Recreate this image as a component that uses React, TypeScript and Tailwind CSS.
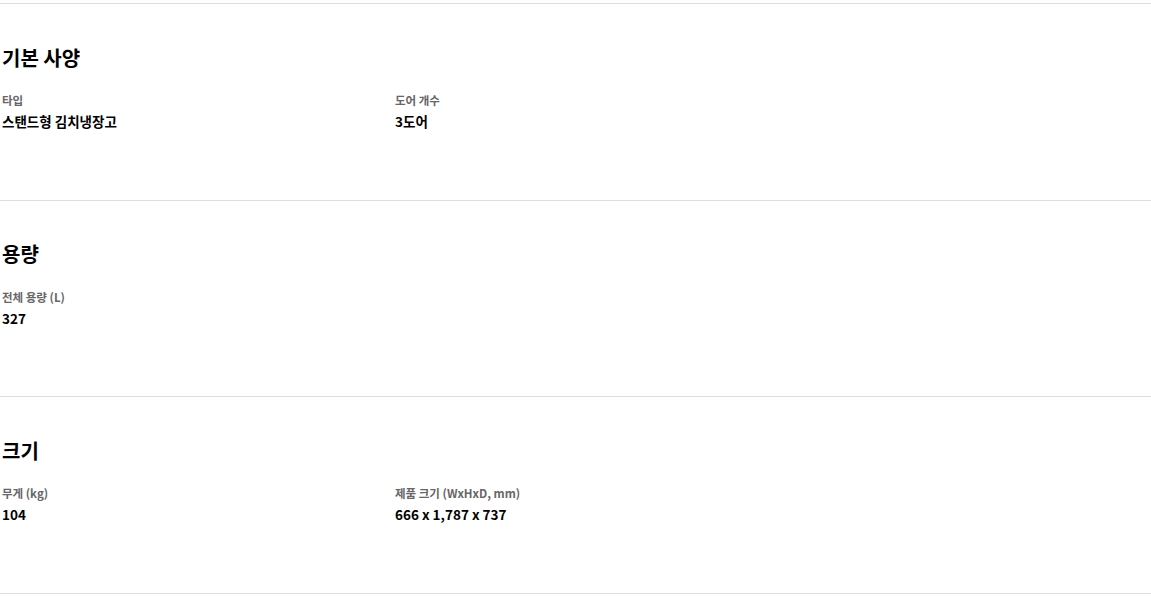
import React from "react";

interface SpecItem {
  label: string;
  value: string;
}

interface SpecSection {
  title: string;
  items: SpecItem[];
}

const sections: SpecSection[] = [
  {
    title: "기본 사양",
    items: [
      { label: "타입", value: "스탠드형 김치냉장고" },
      { label: "도어 개수", value: "3도어" },
    ],
  },
  {
    title: "용량",
    items: [{ label: "전체 용량 (L)", value: "327" }],
  },
  {
    title: "크기",
    items: [
      { label: "무게 (kg)", value: "104" },
      { label: "제품 크기 (WxHxD, mm)", value: "666 x 1,787 x 737" },
    ],
  },
];

export default function App() {
  return (
    <div
      className="w-full bg-white pt-[3px] text-black"
      style={{ fontFamily: '"Noto Sans CJK KR", "Noto Sans", sans-serif' }}
    >
      {sections.map((s) => (
        <section key={s.title} className="border-t border-[#dddddd] pt-[39.5px] pb-[68.6px]">
          <h3 className="pl-[2px] text-[20px] leading-[28px] font-bold">{s.title}</h3>
          <dl className="mt-[19.5px] flex">
            {s.items.map((it) => (
              <div key={it.label} className="w-[393px] pl-[2px]">
                <dt className="text-[11.5px] leading-[18px] font-bold text-[#666666]">{it.label}</dt>
                <dd className="mt-[2px] text-[13.5px] leading-[20px] font-bold">{it.value}</dd>
              </div>
            ))}
          </dl>
        </section>
      ))}
      <div className="border-t border-[#dddddd]" />
    </div>
  );
}
